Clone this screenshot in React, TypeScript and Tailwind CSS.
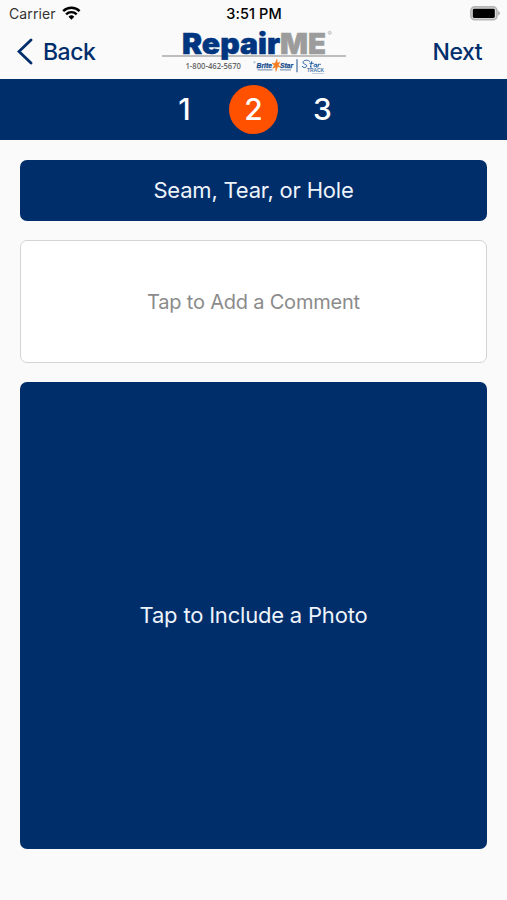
import type { ReactNode } from "react";

function StatusBar() {
  return (
    <div className="grid h-7 grid-cols-3 items-center pl-[9px] pr-[7px] text-[14px] leading-none text-[#333]">
      <div className="flex items-center gap-[6px]">
        <span className="w-[47px] tracking-[0.1px]">Carrier</span>
        <svg className="-mt-px" width="19" height="15" viewBox="0 0 19 15" fill="none" stroke="#000" strokeWidth="2.4">
          <path d="M1.2 5.1a11.8 11.8 0 0 1 16.4 0" />
          <path d="M4.1 8.3a7.6 7.6 0 0 1 10.6 0" />
          <path d="M6.5 10.7a4.2 4.2 0 0 1 5.8 0L9.4 13.8z" fill="#000" stroke="none" />
        </svg>
      </div>
      <span className="-ml-px text-center text-[14.5px] font-medium tracking-[0.1px] text-black">3:51 PM</span>
      <svg className="-mt-px justify-self-end" width="30" height="15" viewBox="0 0 30 15">
        <rect x="0.9" y="0.9" width="26" height="12.8" rx="3.8" fill="#ddd" stroke="#b5b5b5" strokeWidth="1.7" />
        <rect x="2.8" y="2.7" width="22" height="9.2" rx="1.4" fill="#000" />
        <path d="M28.1 4.8q3.6 2.4 0 5z" fill="#aaa" />
      </svg>
    </div>
  );
}

function Logo() {
  return (
    <svg className="overflow-visible" width="184" height="58" viewBox="0 -10 184 58">
      <path d="M0 26h184" stroke="#aaa" strokeWidth="1.7" />
      <g fontFamily="Inter, sans-serif" fontWeight="900" fontSize="28.5">
        <text x="20" y="23.5" textLength="98" lengthAdjust="spacingAndGlyphs" fill="#003580" stroke="#003580" strokeWidth="0.5">
          Repair
        </text>
        <text x="118" y="23.5" textLength="46" lengthAdjust="spacingAndGlyphs" fill="#9c9c9c" stroke="#9c9c9c" strokeWidth="0.5">
          ME
        </text>
      </g>
      <circle cx="167.7" cy="2.8" r="1.6" fill="#ddd" stroke="#bbb" strokeWidth="0.7" />
      <text x="23.5" y="38.8" textLength="55.5" lengthAdjust="spacingAndGlyphs" fontFamily="'Open Sans', sans-serif" fontWeight="600" fontSize="8.2" fill="#666">
        1-800-462-5670
      </text>
      <path d="M91 32h3M92.5 32v1.5" stroke="#9badc5" strokeWidth="0.7" />
      <g fontFamily="'Liberation Sans', sans-serif" fontWeight="700" fontStyle="italic" fontSize="7.6" fill="#134a8d" stroke="#134a8d" strokeWidth="0.25">
        <text x="94.5" y="38" textLength="15.5" lengthAdjust="spacingAndGlyphs">Brite</text>
        <text x="118" y="38" textLength="13" lengthAdjust="spacingAndGlyphs">Star</text>
      </g>
      <path d="M95.5 39.9h15M118 39.9h11" stroke="#6884ab" strokeWidth="1" />
      <path d="m115 29.3.3 3.9 2.8-1.2-1.8 3 2.2 2-3-.2-1.6 4.6-.3-4.4-2.8 1.3 1.6-3.1-2.4-2 3.2.1z" fill="#f37b21" stroke="#f37b21" strokeWidth="0.5" />
      <path d="M135 29.2v13" stroke="#315f98" strokeWidth="1.1" />
      <g stroke="#2560a3" fill="none" strokeLinecap="round">
        <path d="M147.5 31.2c-3.2-2.4-7.2-.2-6.4 1.7.8 1.6 4.3 1.5 3.7 3.4-.6 1.9-4.1 1.5-4.7.1M149.7 31.6l-1.3 5.5q.3.7 1.2-.1M147.8 33.3h3.6M154.4 34.2q-2.4-.5-2.5 1.7c0 1.6 2.2 1.1 2.8-1.4l-.1 2.5M156.4 34.2l-.6 3M156.2 35.2q1-1.4 2.3-1" strokeWidth="1" />
      </g>
      <text x="145" y="42.3" textLength="17" lengthAdjust="spacingAndGlyphs" fontFamily="'Liberation Sans', sans-serif" fontWeight="700" fontSize="5" fill="#4976a9">
        TRACK
      </text>
      <path d="M150 43.5h12" stroke="#99b0cd" strokeWidth="0.6" />
    </svg>
  );
}

function NavBar() {
  return (
    <nav className="flex h-[51px] items-start justify-between pl-[17px] pr-[25px] text-[23px] font-medium leading-none text-[#002e6d]">
      <button className="mt-[10px] flex w-[145px] items-center gap-[10px]">
        <svg width="16" height="27" viewBox="0 0 16 27" fill="none" stroke="currentColor" strokeWidth="2.8" strokeLinecap="round">
          <path d="M14 2 2 13.5 14 25" />
        </svg>
        <span className="pt-px tracking-[-0.5px]">Back</span>
      </button>
      <div className="-mt-2 w-[184px] shrink-0">
        <Logo />
      </div>
      <button className="mt-[12px] flex w-[136px] justify-end pt-px tracking-[-0.5px]">Next</button>
    </nav>
  );
}

function Step({ number, active = false }: { number: number; active?: boolean }) {
  return (
    <div
      className={`flex size-[49px] items-center justify-center rounded-full pb-px text-[30px] font-medium leading-none text-white ${
        active ? "bg-[#ff5100]" : ""
      }`}
    >
      {number}
    </div>
  );
}

function Panel({ className, children }: { className: string; children: ReactNode }) {
  return (
    <button className={`flex w-full items-center justify-center rounded-[7px] ${className}`}>
      {children}
    </button>
  );
}

export default function App() {
  return (
    <div className="flex h-[900px] w-[507px] flex-col bg-[#fafafa] font-[Inter,sans-serif]">
      <header>
        <StatusBar />
        <NavBar />
      </header>
      <div className="flex h-[61px] items-center justify-center gap-5 bg-[#002e6b]">
        <Step number={1} />
        <Step number={2} active />
        <Step number={3} />
      </div>
      <main className="flex flex-col px-5 pt-5">
        <Panel className="h-[61px] bg-[#002e6b] text-[22px] text-[#edf3fb]">
          <span className="tracking-[-0.2px]">Seam, Tear, or Hole</span>
        </Panel>
        <Panel className="mt-[19px] h-[123px] border border-[#d4d4d4] bg-white text-[20px] text-[#8b8b8b]">
          <span className="pt-px tracking-[-0.2px]">Tap to Add a Comment</span>
        </Panel>
        <Panel className="mt-[19px] h-[467px] bg-[#002e6b] text-[22px] text-[#edf3fb]">
          <span className="tracking-[-0.2px]">Tap to Include a Photo</span>
        </Panel>
      </main>
    </div>
  );
}
